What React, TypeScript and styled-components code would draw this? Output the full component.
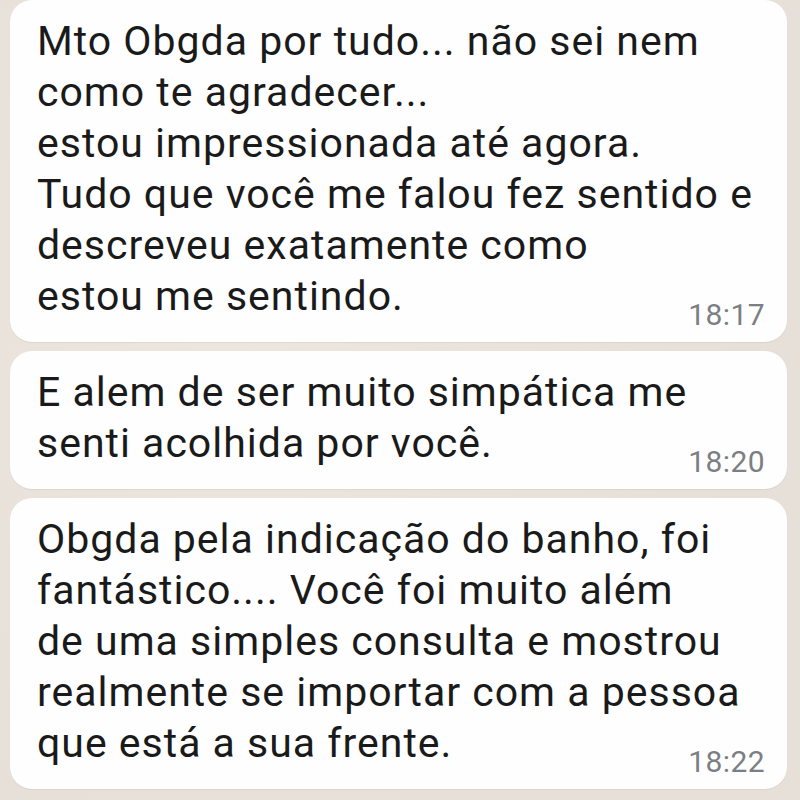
import React from 'react';
import styled, { createGlobalStyle } from 'styled-components';

const GlobalStyle = createGlobalStyle`
  html, body {
    margin: 0;
    padding: 0;
    background: #e9e2da;
  }
  body {
    font-family: Roboto, "Liberation Sans", sans-serif;
  }
`;

interface IMessage {
  lines: string[];
  time: string;
}

const messages: IMessage[] = [
  {
    lines: [
      'Mto Obgda por tudo... não sei nem',
      'como te agradecer...',
      'estou impressionada até agora.',
      'Tudo que você me falou fez sentido e',
      'descreveu exatamente como',
      'estou me sentindo.',
    ],
    time: '18:17',
  },
  {
    lines: ['E alem de ser muito simpática me', 'senti acolhida por você.'],
    time: '18:20',
  },
  {
    lines: [
      'Obgda pela indicação do banho, foi',
      'fantástico.... Você foi muito além',
      'de uma simples consulta e mostrou',
      'realmente se importar com a pessoa',
      'que está a sua frente.',
    ],
    time: '18:22',
  },
];

const MessageBubble = ({ lines, time }: IMessage) => {
  return (
    <Bubble>
      <Text>
        {lines.map((line, idx) => (
          <span key={idx}>{line}</span>
        ))}
      </Text>
      <Time>{time}</Time>
    </Bubble>
  );
};

const App = () => {
  return (
    <>
      <GlobalStyle />
      <Chat>
        {messages.map((msg, idx) => (
          <MessageBubble key={idx} {...msg} />
        ))}
      </Chat>
    </>
  );
};

export default App;

const Chat = styled.main`
  width: 800px;
  height: 800px;
  overflow: hidden;
  box-sizing: border-box;
  padding: 0 13px 0 10px;
  display: flex;
  flex-direction: column;
  gap: 9px;
  background: radial-gradient(circle at 30% 40%, #ece6de 0%, #e7e0d8 70%);
`;

const Bubble = styled.section`
  background: #fefefe;
  border-radius: 22px;
  padding: 16px 22px 12px 27px;
  display: flex;
  flex-direction: column;
  box-shadow: 0 1px 1px rgba(0, 0, 0, 0.06);
`;

const Text = styled.p`
  margin: 0;
  display: flex;
  flex-direction: column;
  font-size: 41px;
  line-height: 51px;
  letter-spacing: 1px;
  color: #1a1a1a;
  span {
    white-space: nowrap;
  }
`;

const Time = styled.span`
  align-self: flex-end;
  margin-top: -22px;
  font-size: 30px;
  line-height: 30px;
  letter-spacing: 0.4px;
  color: #7b7f83;
`;
